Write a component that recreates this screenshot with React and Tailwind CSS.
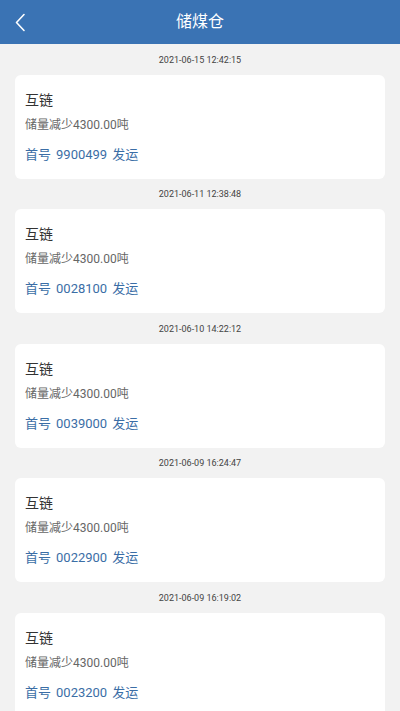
import React from 'react';

const records = [
  { time: '2021-06-15 12:42:15', no: '9900499' },
  { time: '2021-06-11 12:38:48', no: '0028100' },
  { time: '2021-06-10 14:22:12', no: '0039000' },
  { time: '2021-06-09 16:24:47', no: '0022900' },
  { time: '2021-06-09 16:19:02', no: '0023200' },
];

const font = { fontFamily: 'Roboto, "Noto Sans CJK SC", sans-serif' };

export default function App() {
  return (
    <div className="w-[400px] h-[711px] overflow-hidden bg-[#f2f2f2]" style={font}>
      {/* top bar */}
      <div className="h-[44px] bg-[#3a73b4] flex items-center relative">
        <button className="absolute left-[13px] top-[12px] w-[14px] h-[20px] flex items-center justify-center">
          <svg width="12" height="19" viewBox="0 0 12 19" fill="none">
            <path d="M10 1.5 L2.5 9.5 L10 17.5" stroke="#ffffff" strokeWidth="1.6" strokeLinecap="round" strokeLinejoin="round" />
          </svg>
        </button>
        <div className="flex-1 text-center text-white text-[16px] leading-[44px]">储煤仓</div>
      </div>

      <div className="px-[15px]">
        {records.map((r, i) => (
          <div key={i}>
            <div className="h-[30.5px] pt-[2px] flex items-center justify-center text-[9px] text-[#444]">
              {r.time}
            </div>
            <div className="h-[104px] bg-white rounded-[6px] px-[10px] pt-[15px]">
              <div className="text-[14px] leading-[20px] text-[#333]">互链</div>
              <div className="mt-[5px] text-[12px] leading-[20px] text-[#666]">储量减少4300.00吨</div>
              <div className="mt-[10px] text-[13px] leading-[20px] text-[#3b6ea6] flex gap-[5px]">
                <span>首号</span>
                <span>{r.no}</span>
                <span>发运</span>
              </div>
            </div>
          </div>
        ))}
      </div>
    </div>
  );
}
